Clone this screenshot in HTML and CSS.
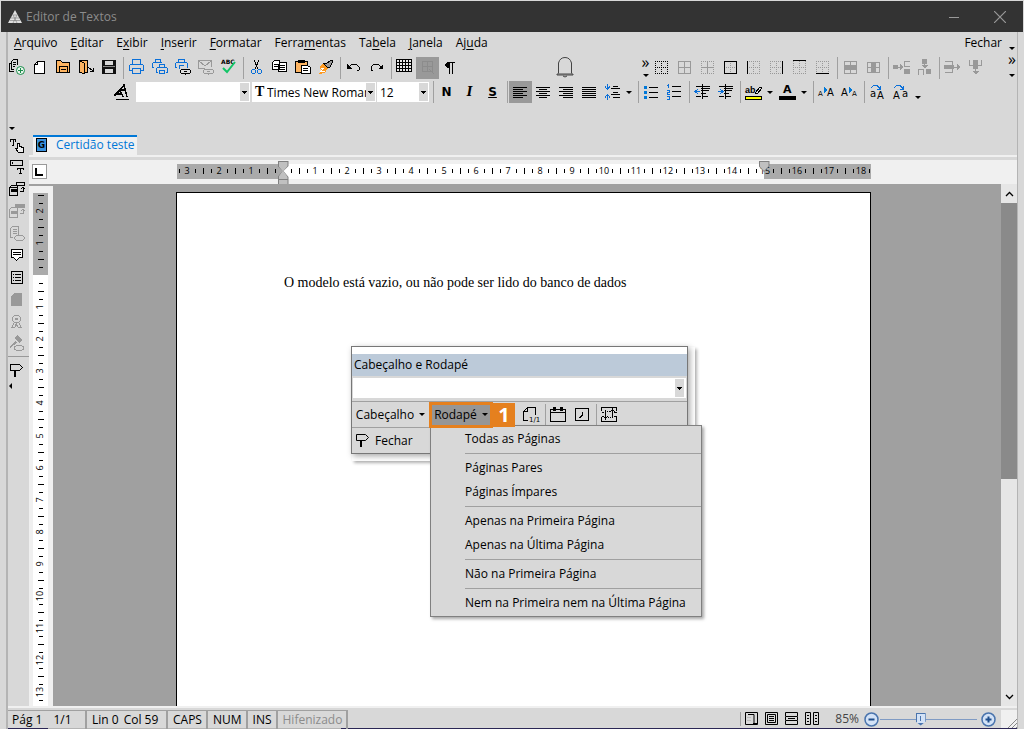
FILE: index.html
```html
<!DOCTYPE html>
<html lang="pt-BR">
<head>
<meta charset="utf-8">
<title>Editor de Textos</title>
<link rel="stylesheet" href="styles.css">
</head>
<body>

<header class="titlebar">
<svg class="logo" width="14" height="14" viewBox="0 0 14 14"><path d="M7 0L14 13H0z" fill="#e0e0e0"/><path d="M3 8h8M2 10.500h10M5 5h4M5 5l4 8M9 5l-4 8" stroke="#777" stroke-width=".6" fill="none"/></svg>
<h1>Editor de Textos</h1>
<button class="win" aria-label="Minimizar"><svg width="12" height="12"><path d="M1 6.500h10" stroke="#999"/></svg></button>
<button class="win" aria-label="Fechar janela"><svg width="12" height="12"><path d="M0 0l12 12M12 0L0 12" stroke="#999" stroke-width="1.200"/></svg></button>
</header>

<div class="frame">

<div class="top">
<div class="bars">
<nav class="menubar">
<button><u>A</u>rquivo</button>
<button><u>E</u>ditar</button>
<button>E<u>x</u>ibir</button>
<button><u>I</u>nserir</button>
<button><u>F</u>ormatar</button>
<button>Ferra<u>m</u>entas</button>
<button>Ta<u>b</u>ela</button>
<button><u>J</u>anela</button>
<button>Aj<u>u</u>da</button>
<button class="close">Fechar</button>
</nav>

<div class="toolbar main-tools">
<button class="tool" aria-label="Novo modelo"><svg viewBox="0 0 17 17"><path d="M6 12.500H1.500V4.500H3M3.500 10.500V2.500L5.500.5h4v5" fill="none" stroke="#000"/><path d="M5 3.500h3M5 5.500h3M5 7.500h2M3 10.500h3" stroke="#000"/><circle cx="12.500" cy="11.500" r="4" fill="#e8f5ec" stroke="#1a8c4a" shape-rendering="auto"/><path d="M10 11.500h5M12.500 9v5" stroke="#1a8c4a"/></svg></button>
<button class="tool" aria-label="Novo"><svg viewBox="0 0 17 17"><path d="M6.500 2.500h7v12h-10v-9z" fill="#fff" stroke="#000"/><path d="M6.500 2.500v3h-3" fill="none" stroke="#000"/></svg></button>
<button class="tool" aria-label="Abrir"><svg viewBox="0 0 17 17"><path d="M2.500 13.500v-12h4l2 2h7v10z" fill="#fdb462" stroke="#000"/><path d="M5.500 13.500v-6h8v6M7 10.500h5" fill="none" stroke="#000"/></svg></button>
<button class="tool" aria-label="Sair"><svg viewBox="0 0 17 17"><path d="M2.500 1.500h8v12h-8z" fill="#fdb462" stroke="#000"/><path d="M2.500 1.500l5 3v10l-5-1z" fill="#fdb462" stroke="#000"/><path d="M11 8l5 4M16.500 9v3.500H13" fill="none" stroke="#000"/></svg></button>
<button class="tool" aria-label="Salvar"><svg viewBox="0 0 17 17"><path d="M2 1h14v14H2z" fill="#111"/><path d="M5 2h8v4H5zM5 10h8v4H5z" fill="#d8d8d8"/><path d="M3 7.500h12" stroke="#888"/></svg></button>
<span class="sep"></span>
<button class="tool blue" aria-label="Imprimir"><svg viewBox="0 0 17 17"><path d="M4.500 5V.5h8V5M4.500 11.500h-3v-5l1-1h12l1 1v5h-3M4.500 9.500h8v5h-8z"/></svg></button>
<button class="tool blue" aria-label="Imprimir rápido"><svg viewBox="0 0 17 17"><path d="M4.500 3V.5h5V3M3 8.500H1.500v-4l1-1h8l1 1M8.500 8V5.500h5V8M7 13.500H5.500v-4l1-1h9l1 1v4H15M8.500 11.500h5v3h-5z"/></svg></button>
<button class="tool blue" aria-label="Visualizar impressão"><svg viewBox="0 0 17 17"><path d="M4.500 3V.5h6V3M3 8.500H1.500v-4l1-1h10l1 1v4M5 10V6.500h5"/><ellipse cx="11.500" cy="12.500" rx="5" ry="2.500" fill="#ddd" stroke="#000"/><path class="k" d="M10 12.500h3"/></svg></button>
<button class="tool gray" aria-label="Enviar"><svg viewBox="0 0 17 17"><path d="M8 9.500H1.500v-8h13v6M2 2l6 5 6-5"/><ellipse cx="11.500" cy="12.500" rx="5" ry="2.500"/><path d="M10 12.500h3"/></svg></button>
<button class="tool" aria-label="Ortografia"><svg viewBox="0 0 17 17"><text x="1" y="5" class="t6">ABC</text><path d="M3 9l4 4 8-10" fill="none" stroke="#11c566" stroke-width="2" shape-rendering="auto"/></svg></button>
<span class="sep"></span>
<button class="tool" aria-label="Recortar"><svg viewBox="0 0 17 17"><path d="M6 1l4.500 10M11 1L6.500 11" stroke="#000" fill="none"/><circle cx="5.500" cy="12.500" r="2" class="b"/><circle cx="11.500" cy="12.500" r="2" class="b"/></svg></button>
<button class="tool" aria-label="Copiar"><svg viewBox="0 0 17 17"><path d="M1.500 3.500l2-2h5v9h-7zM7.500 5.500l2-2h6v9h-8z" fill="#fff" stroke="#000"/><path d="M3 5.500h4M3 7.500h4M9 6.500h5M9 8.500h5M9 10.500h5" stroke="#000"/></svg></button>
<button class="tool" aria-label="Colar"><svg viewBox="0 0 17 17"><path d="M1.500 2.500h12v11h-12z" fill="#fdb462" stroke="#000"/><path d="M4 1h7v3H4z"/><path d="M7.500 6.500h6l3 2v6h-9z" fill="#fff" stroke="#000"/><path d="M9 9.500h5M9 11.500h5" stroke="#000"/></svg></button>
<button class="tool" aria-label="Pincel"><svg viewBox="0 0 17 17"><path d="M3 7l3-2 5 4-3 5-7 1 3-3z" fill="#ff9a1f"/><path d="M4 9h3l-3 3h4" stroke="#fff" fill="none"/><path d="M6 4l5 5 2-1 3-6-2-1-5 4z" fill="#999" stroke="#000"/></svg></button>
<span class="sep"></span>
<button class="tool" aria-label="Desfazer"><svg viewBox="0 0 17 17"><path d="M4 8l3-3h4l3 3v3l-2 1" fill="none" stroke="#000"/><path d="M2 5v5h5z"/></svg></button>
<button class="tool" aria-label="Refazer"><svg viewBox="0 0 17 17"><path d="M13 8l-3-3H6L3 8v3l2 1" fill="none" stroke="#000"/><path d="M15 5v5h-5z"/></svg></button>
<span class="sep"></span>
<button class="tool" aria-label="Tabela"><svg viewBox="0 0 17 17"><path d="M.5.500h15v12H.5z" fill="#e8e8e8" stroke="#000"/><path class="k" d="M0 3.500h16M0 6.500h16M0 9.500h16M3.500 0v13M6.500 0v13M9.500 0v13M12.500 0v13"/></svg></button>
<button class="tool active" aria-label="Grade"><svg viewBox="0 0 17 17"><path d="M3.500 2.500h10v10h-10zM8.500 3v10M3 7.500h11M10 10l5 5" fill="none" stroke="#8c8c8c"/></svg></button>
<button class="tool" aria-label="Marcas de parágrafo"><svg viewBox="0 0 17 17"><path d="M7 3v6H5L3 7V5l2-2z"/><path class="k" d="M6 3.500h7M7.500 3v12M10.500 3v12"/></svg></button>

<button class="bell" aria-label="Notificações"><svg width="18" height="21" viewBox="0 0 18 21"><path d="M2.500 16.500V6Q4 .5 9 .5T15.500 6v10.500M1 17h16v1H1zM7 19q2 2 4 0" fill="none" stroke="#444"/></svg></button>

<div class="toolbar border-tools">
<span class="more">»<i class="down"></i></span>
<button class="tool" aria-label="Sem bordas"><svg viewBox="0 0 17 17"><path class="dots k" d="M2 2.500h13M2 8.500h13M2 14.500h13M2.500 2v13M8.500 2v13M14.500 2v13"/></svg></button>
<button class="tool gray" aria-label="Todas as bordas"><svg viewBox="0 0 17 17"><path d="M2.500 2.500h12v12h-12zM2.500 8.500h12M8.500 2.500v12"/></svg></button>
<button class="tool gray" aria-label="Bordas internas"><svg viewBox="0 0 17 17"><path d="M2 8.500h13M8.500 2v13"/><path class="dots" d="M2 2.500h13M2 14.500h13M2.500 2v13M14.500 2v13"/></svg></button>
<button class="tool gray" aria-label="Contorno"><svg viewBox="0 0 17 17"><path class="dots" d="M2 8.500h13M8.500 2v13"/><path d="M2.500 2.500h12v12h-12z" class="k"/></svg></button>
<button class="tool gray" aria-label="Borda esquerda"><svg viewBox="0 0 17 17"><path class="dots" d="M2 2.500h13M2 8.500h13M2 14.500h13M8.500 2v13M14.500 2v13"/><path d="M2.500 2v13" class="k"/></svg></button>
<button class="tool gray" aria-label="Borda direita"><svg viewBox="0 0 17 17"><path class="dots" d="M2 2.500h13M2 8.500h13M2 14.500h13M8.500 2v13M2.500 2v13"/><path d="M14.500 2v13" class="k"/></svg></button>
<button class="tool gray" aria-label="Borda superior"><svg viewBox="0 0 17 17"><path class="dots" d="M2 14.500h13M2 8.500h13M2.500 2v13M8.500 2v13M14.500 2v13"/><path d="M2 1.500h13" class="k"/></svg></button>
<button class="tool gray" aria-label="Borda inferior"><svg viewBox="0 0 17 17"><path class="dots" d="M2 2.500h13M2 8.500h13M2.500 2v13M8.500 2v13M14.500 2v13"/><path d="M2 14.500h13" class="k"/></svg></button>
<span class="sep"></span>
<button class="tool gray" aria-label="Selecionar linha"><svg viewBox="0 0 17 17"><path d="M2.500 2.500h12v12h-12zM8.500 2v13"/><path d="M2 6h13v5H2z" class="g"/></svg></button>
<button class="tool gray" aria-label="Selecionar coluna"><svg viewBox="0 0 17 17"><path d="M2.500 3.500h12v10h-12zM2.500 8.500h12"/><path d="M6 3h5v11H6z" class="g"/></svg></button>
<span class="sep"></span>
<button class="tool gray" aria-label="Inserir linha"><svg viewBox="0 0 17 17"><path d="M0 6h5v4H0zM11 10h6v5h-6zM7 5l4 3-4 3z" class="g"/><path d="M5 8.500h5M17 2.500h-5.500v5H17"/></svg></button>
<button class="tool gray" aria-label="Inserir coluna"><svg viewBox="0 0 17 17"><path d="M6 0h5v5H6zM10 10h5v5h-5zM6 6h6l-3 4z" class="g"/><path d="M8.500 5v3M2.500 16v-5.500h5V16"/></svg></button>
<span class="sep"></span>
<button class="tool gray" aria-label="Excluir linha"><svg viewBox="0 0 17 17"><path d="M0 6h10v4H0zM13 5l4 3-4 3z" class="g"/><path d="M10 8.500h5M1 2.500h7v11H1"/></svg></button>
<button class="tool gray" aria-label="Excluir coluna"><svg viewBox="0 0 17 17"><path d="M6 1h5v9H6zM5 12h7l-3 4z" class="g"/><path d="M8.500 10v4M2.500 1v5h12V1"/></svg></button>
</div>
</div>

<div class="toolbar format-tools">
<button class="tool" aria-label="Estilos"><svg viewBox="0 0 17 17"><path d="M4 9l7-8 3 12M7 6h5M1 12l6-6 3 7M3 10h6" fill="none" stroke="#000" stroke-width="1.500"/><path class="k" d="M3 15.500h13"/></svg></button>
<label class="combo style-box"><input type="text" aria-label="Estilo"><i class="down"></i></label>
<label class="combo font-box"><b>T</b><input type="text" value="Times New Roman" aria-label="Fonte"><i class="down"></i></label>
<label class="combo size-box"><input type="text" value="12" aria-label="Tamanho"><i class="down"></i></label>
<span class="sep"></span>
<button class="tool letter" aria-label="Negrito">N</button>
<button class="tool letter italic" aria-label="Itálico">I</button>
<button class="tool letter under" aria-label="Sublinhado">S</button>
<span class="sep"></span>
<button class="tool active" aria-label="Alinhar à esquerda"><svg viewBox="0 0 17 17"><path class="k" d="M1 3.500h14M1 5.500h10M1 7.500h14M1 9.500h10M1 11.500h14M1 13.500h10"/></svg></button>
<button class="tool" aria-label="Centralizar"><svg viewBox="0 0 17 17"><path class="k" d="M1 3.500h14M4 5.500h8M1 7.500h14M4 9.500h8M1 11.500h14M4 13.500h8"/></svg></button>
<button class="tool" aria-label="Alinhar à direita"><svg viewBox="0 0 17 17"><path class="k" d="M1 3.500h14M5 5.500h10M1 7.500h14M5 9.500h10M1 11.500h14M5 13.500h10"/></svg></button>
<button class="tool" aria-label="Justificar"><svg viewBox="0 0 17 17"><path class="k" d="M1 3.500h14M1 5.500h14M1 7.500h14M1 9.500h14M1 11.500h14M1 13.500h14"/></svg></button>
<button class="tool" aria-label="Espaçamento"><svg viewBox="0 0 17 17"><path class="b" d="M3.500 0v5M1 2.500l2.500 3 2.500-3M3.500 16v-5M1 13.500l2.500-3 2.500 3"/><path class="k" d="M9 2.500h5M7 4.500h9M9 8.500h5M7 10.500h9M9 13.500h7"/></svg></button>
<i class="down wide"></i>
<span class="sep"></span>
<button class="tool" aria-label="Marcadores"><svg viewBox="0 0 17 17"><path d="M1 2h3v3H1zM1 7h3v3H1zM1 12h3v3H1z" fill="#0078d7"/><path class="k" d="M6 3.500h9M6 8.500h9M6 13.500h9"/></svg></button>
<button class="tool" aria-label="Numeração"><svg viewBox="0 0 17 17"><path class="b" d="M2.500 0v4M1 1.500h1M1 6.500h2v2H1v2h3M1 12.500h2v3H1"/><path class="k" d="M6 2.500h9M6 7.500h9M6 12.500h9"/></svg></button>
<span class="sep"></span>
<button class="tool" aria-label="Diminuir recuo"><svg viewBox="0 0 17 17"><path class="k" d="M2 2.500h14M7 4.500h9M7 6.500h8M7 9.500h5M2 12.500h5M8 12.500h6M8.500 0v15"/><path d="M1 7.500h5M4 5L1 7.500 4 10" class="b"/></svg></button>
<button class="tool" aria-label="Aumentar recuo"><svg viewBox="0 0 17 17"><path class="k" d="M2 2.500h14M7 4.500h9M7 6.500h8M7 9.500h5M2 12.500h5M8 12.500h6M8.500 0v15"/><path d="M1 7.500h5M3 5l3 2.500L3 10" class="b"/></svg></button>
<span class="sep"></span>
<button class="tool" aria-label="Realce"><svg viewBox="0 0 17 17"><text x="0" y="9" class="t9">ab</text><path d="M10 9l5-6 2 1-5 6z" fill="#ddd" stroke="#000"/><path d="M.5 12.500h16v3H.5z" fill="#ff0" stroke="#000"/></svg></button>
<i class="down wide"></i>
<button class="tool" aria-label="Cor da fonte"><svg viewBox="0 0 17 17"><text x="4" y="9" class="t11">A</text><path d="M0 12h17v4H0z"/></svg></button>
<i class="down wide"></i>
<span class="sep"></span>
<button class="tool" aria-label="Aumentar fonte"><svg viewBox="0 0 17 17"><text x="0" y="12" class="t7">A</text><text x="9" y="12" class="t10">A</text><path d="M6 3l4 3-4 3z" fill="#0078d7"/></svg></button>
<button class="tool" aria-label="Diminuir fonte"><svg viewBox="0 0 17 17"><text x="0" y="12" class="t10">A</text><text x="11" y="12" class="t7">A</text><path d="M8 3l4 3-4 3z" fill="#0078d7"/></svg></button>
<span class="sep"></span>
<button class="tool" aria-label="Maiúsculas"><svg viewBox="0 0 17 17"><text x="1" y="13" class="t10">a</text><text x="8" y="15" class="t10">A</text><path class="b" d="M2 4l3-3h3l3 4M8 5h3V2"/></svg></button>
<button class="tool" aria-label="Minúsculas"><svg viewBox="0 0 17 17"><text x="1" y="15" class="t10">A</text><text x="10" y="13" class="t10">a</text><path class="b" d="M2 4l3-3h3l3 4M8 5h3V2"/></svg></button>
<i class="down wide low"></i>
</div>
</div>
<div class="overflow"><i class="down"></i><span>»</span><i class="down"></i></div>
</div>

<div class="work">
<aside class="side">
<i class="down"></i>
<button class="tool" aria-label="Campo de texto"><svg viewBox="0 0 17 17"><path d="M2.500 5V2.500h5V5M5 3v6M4 8.500h2" fill="none" stroke="#000"/><path d="M9.500 11V6.500h2v3l4 1v5h-5l-3-4h2" fill="#eee" stroke="#000"/></svg></button>
<button class="tool" aria-label="Caixa de texto"><svg viewBox="0 0 17 17"><path class="k" d="M2.500 1.500h12v5h-12zM4.500 3v2M9.500 11V9.500h6V11M12.500 10v5M11 14.500h3"/></svg></button>
<button class="tool" aria-label="Modelo"><svg viewBox="0 0 17 17"><path class="k" d="M1.500 14.500v-8l2-2h6v10zM2 6.500h7M8.500 3V1.500h8v3h-8zM12 10.500h3v-4M13 8l2-2 2 2"/><path d="M3 8h6v3H3z"/></svg></button>
<button class="tool gray" aria-label="Atualizar modelo"><svg viewBox="0 0 17 17"><path d="M1.500 14.500v-8l2-2h6v10zM12 10.500h3v-4M13 8l2-2 2 2"/><path d="M3 8h6v3H3zM7 1h10v4H7z" class="g"/></svg></button>
<button class="tool gray" aria-label="Visualizar"><svg viewBox="0 0 17 17"><path d="M5 12.500H2.500v-9l2-2h6v8M5 4.500h4M5 6.500h4M5 8.500h4"/><ellipse cx="11.500" cy="13" rx="5" ry="2.500"/></svg></button>
<button class="tool" aria-label="Comentário"><svg viewBox="0 0 17 17"><path d="M3.500 2.500h11v8h-3l-3 3-3-3h-2z" fill="#fff" stroke="#000"/><path class="k" d="M5 5.500h8M5 7.500h8"/></svg></button>
<button class="tool" aria-label="Lista"><svg viewBox="0 0 17 17"><path class="k" d="M3.500 2.500h11v12h-11zM5 5.500h1M7 5.500h6M5 8.500h1M7 8.500h6M5 11.500h1M7 11.500h6"/></svg></button>
<button class="tool gray" aria-label="Página"><svg viewBox="0 0 17 17"><path d="M6 2h8v13H3V5z" class="g"/></svg></button>
<button class="tool gray" aria-label="Certificado"><svg viewBox="0 0 17 17"><circle cx="8.500" cy="6" r="4"/><circle cx="8.500" cy="6" r="1.500" class="g"/><path d="M6 10l-2 4h3l1-3 2 3h3l-2-4"/></svg></button>
<button class="tool gray" aria-label="Julgamento"><svg viewBox="0 0 17 17"><path d="M6 3l3-3 5 5-3 3zM7 6L1 12l1 1 7-5z" class="g"/><ellipse cx="11" cy="13" rx="5" ry="2.500"/></svg></button>
<span class="rule"></span>
<button class="tool" aria-label="Fechar documento"><svg viewBox="0 0 17 17"><path class="k" d="M2.500 2.500h9l3 3-3 3h-9z"/><path d="M6 9h2v6H6z"/></svg></button>
<i class="left"></i>
</aside>

<main class="editor">
<div class="tabs">
<a class="tab" href="#"><span class="tab-icon">G</span>Certidão teste</a>
</div>
<div class="ruler-row">
<span class="corner"><svg width="13" height="13"><path d="M3 3v7h7" fill="none" stroke="#000" stroke-width="2"/></svg></span>
<div class="ruler-area">
<div class="hruler" id="hruler"><i class="indent"></i><i class="indent right"></i></div>
</div>
</div>
<div class="document">
<div class="vruler-col"><div class="vruler" id="vruler"></div></div>
<div class="canvas">
<article class="page">
<p>O modelo está vazio, ou não pode ser lido do banco de dados</p>
</article>
</div>
<div class="scroll">
<button aria-label="Rolar para cima"><svg width="9" height="6"><path d="M1 5l3.500-3.500L8 5" fill="none" stroke="#000" stroke-width="1.300"/></svg></button>
<div class="track"><div class="thumb"></div></div>
<button aria-label="Rolar para baixo"><svg width="9" height="6"><path d="M1 1l3.500 3.500L8 1" fill="none" stroke="#000" stroke-width="1.300"/></svg></button>
</div>

<section class="palette">
<h2>Cabeçalho e Rodapé</h2>
<label class="combo palette-box"><input type="text" aria-label="Conteúdo"><i class="down"></i></label>
<div class="palette-row">
<button class="drop">Cabeçalho<i class="down"></i></button>
<button class="drop marked">Rodapé<i class="down"></i></button>
<span class="step">1</span>
<button class="tool" aria-label="Número da página"><svg viewBox="0 0 17 17"><path class="k" d="M6 14.500H1.500v-9l4-4h8v7M5.500 2v3.500H2"/><text x="7" y="16" class="t7">1/1</text></svg></button>
<span class="sep"></span>
<button class="tool" aria-label="Data"><svg viewBox="0 0 17 17"><path class="k" d="M.5 3.500h15v12H.5zM1 6.500h15"/><path d="M3 1h3v4H3zM10 1h3v4h-3z"/></svg></button>
<button class="tool" aria-label="Hora"><svg viewBox="0 0 17 17"><path class="k" d="M2.500 2.500h13v12h-13zM9.500 6v3l-3 3"/></svg></button>
<span class="sep"></span>
<button class="tool" aria-label="Margens"><svg viewBox="0 0 17 17"><path class="k" d="M.5 5V1.500h15V5M.5 11v4.500h15V11M4.500 4v8M11.500 4v8M1 6.500h2M6 5.500h1M8 5.500h1M13 6.500h3M1 10.500h2M7 11.500h1M9 11.500h1M13 10.500h3M2.500 10l2 3 2-3M9.500 6l2-3 2 3"/></svg></button>
</div>
<div class="palette-row">
<button class="shut"><svg width="17" height="17" viewBox="0 0 17 17"><path d="M1.500 2.500h9l3 3-3 3h-9z" fill="none" stroke="#000"/><path d="M5 9h2v6H5z"/></svg>Fechar</button>
</div>
<div class="menu" role="menu">
<button role="menuitem">Todas as Páginas</button>
<hr>
<button role="menuitem">Páginas Pares</button>
<button role="menuitem">Páginas Ímpares</button>
<hr>
<button role="menuitem">Apenas na Primeira Página</button>
<button role="menuitem">Apenas na Última Página</button>
<hr>
<button role="menuitem">Não na Primeira Página</button>
<hr>
<button role="menuitem">Nem na Primeira nem na Última Página</button>
</div>
</section>
</div>
</main>
</div>

<footer class="status">
<span class="cell pos">Pág 1<span>1/1</span></span>
<span class="cell line">Lin 0<span>Col 59</span></span>
<span class="cell">CAPS</span>
<span class="cell">NUM</span>
<span class="cell">INS</span>
<span class="cell off">Hifenizado</span>
<div class="views">
<button aria-label="Página inteira"><svg width="14" height="14"><path class="k" d="M.5.5h12v12H.5zM3 2.500h6v9M8 11.500h4"/><path d="M2 5.500h4M2 8.500h4" stroke="#bbb"/></svg></button>
<button aria-label="Layout de impressão"><svg width="14" height="14"><path class="k" d="M.5.5h12v12H.5zM2.500 2.500h8v8h-8zM4 4.500h5M4 6.500h5M4 8.500h5"/></svg></button>
<button aria-label="Normal"><svg width="14" height="14"><path class="k" d="M.5 4V.5h12V4M.5 4.500h12v4H.5zM3 6.500h7M.5 9v3.500h12V9"/></svg></button>
<button aria-label="Duas páginas"><svg width="14" height="14"><path class="k" d="M.5.5h5v12h-5zM8.500.5h5v12h-5zM2 3.500h2M2 6.500h2M2 9.500h2M10 3.500h2M10 6.500h2M10 9.500h2"/></svg></button>
</div>
<label class="zoom-label" for="zoom">85%</label>
<button class="round" aria-label="Reduzir"><svg width="15" height="15"><circle cx="7.500" cy="7.500" r="6.500" fill="#d3e2f6" stroke="#4a74ad" stroke-width="1.500"/><path d="M4.500 7.500h6" stroke="#1f4e8c" stroke-width="2"/></svg></button>
<input class="zoom" id="zoom" type="range" min="0" max="100" value="41">
<button class="round" aria-label="Ampliar"><svg width="15" height="15"><circle cx="7.500" cy="7.500" r="6.500" fill="#d3e2f6" stroke="#4a74ad" stroke-width="1.500"/><path d="M4.500 7.500h6M7.500 4.500v6" stroke="#1f4e8c" stroke-width="2"/></svg></button>
<span class="grip"><svg width="9" height="9"><path d="M0 9l9-9M4 9l5-5M8 9l1-1" stroke="#888"/></svg></span>
</footer>
</div>

<script src="ruler.js"></script>
</body>
</html>
```

FILE: styles.css
```css
* {
box-sizing: border-box;
}

body {
margin: 0;
height: 100vh;
display: flex;
flex-direction: column;
background: #d8d8d8;
color: #000;
font: 12px/16px "Open Sans", "Noto Sans", sans-serif;
overflow: hidden;
}

button, input {
font: inherit;
color: inherit;
border: 0;
padding: 0;
margin: 0;
background: none;
}

.titlebar {
display: flex;
align-items: center;
flex: none;
height: 31px;
margin: 1px 1px 0;
padding: 0 17px 0 7px;
background: #333;
}

.titlebar h1 {
flex: 1;
margin: 0 0 0 4px;
color: #8c8c8c;
font-size: 12px;
font-weight: normal;
}

.win {
display: flex;
margin-left: 34px;
}

.frame {
flex: 1;
min-height: 0;
display: flex;
flex-direction: column;
margin: 0 6px 0 6px;
padding-bottom: 1px;
border-left: 2px solid #b4b4b4;
border-right: 1px solid #b4b4b4;
background: linear-gradient(90deg, #2b2655 4%, #b4b4b4 4%, #b4b4b4 33%, #2b2655 33%) bottom / 100% 1px no-repeat;
}

.top {
display: flex;
flex: none;
height: 92px;
}

.bars {
flex: 1;
min-width: 0;
}

.menubar {
display: flex;
height: 23px;
padding: 0 5px 2px 6px;
gap: 13px;
align-items: center;
}

.menubar .close {
margin-left: auto;
}

u {
text-underline-offset: 2px;
}

.toolbar {
display: flex;
align-items: center;
height: 25px;
}

.main-tools {
margin-left: -3px;
}

.tool {
display: flex;
align-items: center;
justify-content: center;
flex: none;
width: 23px;
height: 22px;
}

.tool svg {
width: 17px;
height: 17px;
shape-rendering: crispEdges;
overflow: visible;
}

.tool.active {
background: #999;
}

.k {
fill: none;
stroke: #000;
}

.b, .blue path {
fill: none;
stroke: #0a6fd8;
}

.blue .k {
stroke: #000;
}

.gray svg > * {
fill: none;
stroke: #999;
}

.gray svg .k {
stroke: #000;
}

.gray svg .g {
fill: #999;
stroke: none;
}

.dots {
stroke-dasharray: 1 1;
}

.t6 { font: bold 6px "DejaVu Sans"; }
.t7 { font: 7px "DejaVu Sans"; }
.t9 { font: bold 9px "Liberation Sans"; }
.t10 { font: 10px "DejaVu Sans"; }
.t11 { font: bold 11px "DejaVu Sans"; }

.sep {
flex: none;
width: 1px;
height: 22px;
margin: 0 1px 0 3px;
background: #a0a0a0;
}

.down {
flex: none;
border: 3px solid transparent;
border-top-color: #000;
border-bottom: 0;
}

.down.wide {
margin: 0 3px 0 2px;
}

.down.low {
align-self: end;
margin: 0 0 5px 3px;
}

.bell {
display: flex;
margin: 0 auto;
padding-left: 27px;
}

.border-tools {
padding-right: 20px;
}

.more {
display: flex;
flex-direction: column;
align-items: center;
width: 9px;
font-size: 16px;
line-height: 8px;
gap: 8px;
}

.format-tools {
height: 24px;
padding-left: 102px;
}

.combo {
display: flex;
align-items: center;
flex: none;
height: 20px;
background: #fff;
}

.combo input {
flex: 1;
min-width: 0;
height: 20px;
outline: 0;
}

.combo .down {
width: 9px;
height: 18px;
margin-right: 1px;
border: 0;
background: linear-gradient(#000, #000) 2px 8px / 5px 1px no-repeat,
linear-gradient(#000, #000) 3px 9px / 3px 1px no-repeat,
linear-gradient(#000, #000) 4px 10px / 1px 1px no-repeat, #d8d8d8;
}

.style-box {
width: 114px;
margin: 0 2px 0 3px;
}

.font-box {
width: 124px;
}

.font-box b {
width: 15px;
padding-left: 3px;
font: bold 14px "Liberation Serif", serif;
}

.size-box {
width: 52px;
margin: 0 1px;
padding-left: 3px;
}

.letter {
font: bold 12px "DejaVu Sans", sans-serif;
}

.italic {
font-family: "DejaVu Serif", serif;
font-style: italic;
}

.under {
text-decoration: underline;
}

.overflow {
display: flex;
flex-direction: column;
align-items: center;
width: 10px;
padding-top: 15px;
font-size: 16px;
line-height: 12px;
}

.overflow span {
margin: 3px 0 9px;
height: 12px;
}

.work {
display: flex;
flex: 1;
min-height: 0;
}

.side {
display: flex;
flex-direction: column;
flex: none;
width: 21px;
}

.side .tool {
width: 17px;
}

.side > .down {
margin: 3px 0 4px 1px;
align-self: start;
}

.rule {
flex: none;
height: 1px;
margin: 2px 0;
background: #999;
}

.left {
align-self: start;
margin: 2px 0 0 1px;
border: 3px solid transparent;
border-right-color: #000;
border-left: 0;
}

.editor {
display: flex;
flex-direction: column;
flex: 1;
min-width: 0;
}

.tabs {
padding: 11px 0 0 4px;
border-bottom: 2px solid #f0f0f0;
margin-bottom: 3px;
}

.tab {
display: inline-flex;
align-items: center;
height: 20px;
padding: 0 2px 2px 3px;
gap: 9px;
vertical-align: top;
border-top: 2px solid #0078d7;
background: #f0f0f0;
color: #0078d7;
text-decoration: none;
white-space: nowrap;
}

.tab-icon {
width: 11px;
height: 14px;
border: 1px solid #000;
background: #3b93e0;
color: #000;
font: bold 9px/12px "DejaVu Sans", sans-serif;
text-align: center;
}

.ruler-row {
display: flex;
flex: none;
height: 24px;
background: #f0f0f0;
}

.corner {
width: 15px;
height: 15px;
margin: 4px 6px 0 3px;
border: 1px solid #999;
background: #fff;
}

.corner svg {
display: block;
}

.ruler-area {
flex: 1;
padding: 4px 23px 0 0;
}

.hruler {
position: relative;
width: 694px;
height: 15px;
margin: 0 auto;
background: linear-gradient(90deg, #aaa 106px, #fff 106px, #fff 587px, #aaa 587px);
}

.hruler svg, .vruler svg {
display: block;
shape-rendering: crispEdges;
}

.hruler text, .vruler text {
font-size: 9px;
text-anchor: middle;
}

.indent {
position: absolute;
left: 101px;
top: -3px;
width: 11px;
height: 25px;
background: #808080;
clip-path: polygon(0 0, 100% 0, 100% 5px, 6px 10px, 100% 16px, 100% 100%, 0 100%, 0 16px, 5px 10px, 0 5px);
}

.indent::after {
content: "";
position: absolute;
inset: 1px;
background: linear-gradient(#c0c0c0 17px, #808080 17px, #808080 18px, #c0c0c0 18px);
clip-path: polygon(0 0, 100% 0, 100% 4px, 5px 9px, 100% 15px, 100% 100%, 0 100%, 0 15px, 4px 9px, 0 4px);
}

.indent.right {
left: 582px;
height: 11px;
clip-path: polygon(0 0, 100% 0, 100% 5px, 50% 100%, 0 5px);
}

.indent.right::after {
clip-path: polygon(0 0, 100% 0, 100% 4px, 50% 100%, 0 4px);
}

.document {
position: relative;
display: flex;
flex: 1;
min-height: 0;
background: #a0a0a0;
}

.vruler-col {
flex: none;
width: 24px;
margin-top: 2px;
padding: 7px 0 0 4px;
overflow: hidden;
background: #f0f0f0;
}

.vruler {
width: 15px;
height: 100%;
background: linear-gradient(#aaa 82px, #fff 82px);
}

.canvas {
flex: 1;
padding: 8px 7px 0 0;
overflow: hidden;
}

.page {
width: 695px;
height: 100%;
margin: 0 auto;
padding: 81px 107px 0;
border: 1px solid #000;
border-bottom: 0;
background: #fff;
}

.page p {
margin: 0;
font: 14px/18px "Liberation Serif", serif;
white-space: nowrap;
}

.scroll {
display: flex;
flex-direction: column;
width: 16px;
background: #e6e6e6;
}

.scroll button {
display: flex;
align-items: center;
justify-content: center;
height: 19px;
}

.track {
flex: 1;
}

.thumb {
height: 57%;
background: #8a8a8a;
}

.palette {
position: absolute;
left: 322px;
top: 162px;
width: 337px;
padding-top: 7px;
border: 1px solid #777;
background: linear-gradient(#fff 7px, #d8d8d8 7px);
box-shadow: 2px 2px 6px rgba(0, 0, 0, .35), 4px 4px 0 3px #fff, 6px 6px 3px 3px rgba(0, 0, 0, .3);
}

.palette h2 {
margin: 0;
padding-left: 2px;
background: #bccad9;
font-size: 12px;
font-weight: normal;
line-height: 22px;
}

.palette-box {
height: 20px;
margin: 2px 1px 3px;
padding-right: 1px;
}

.palette-row {
display: flex;
align-items: center;
height: 26px;
border-top: 1px solid #a0a0a0;
}

.drop {
display: flex;
align-items: center;
justify-content: center;
height: 24px;
width: 77px;
gap: 5px;
}

.drop.marked {
width: 64px;
height: 26px;
border: 3px solid #e5801e;
background: #969696;
z-index: 2;
}

.step {
width: 22px;
margin-right: 4px;
height: 24px;
z-index: 2;
background: #e5801e;
color: #fff;
font-size: 20px;
font-weight: bold;
line-height: 23px;
text-align: center;
}

.shut {
display: flex;
align-items: center;
gap: 3px;
padding-left: 3px;
}

.menu {
position: absolute;
left: 78px;
top: 78px;
width: 272px;
padding: 1px 0;
border: 1px solid #808080;
background: #d8d8d8;
box-shadow: 2px 2px 3px rgba(0, 0, 0, .35);
}

.menu button {
display: block;
width: 100%;
height: 24px;
padding-left: 34px;
text-align: left;
white-space: nowrap;
}

.menu hr {
height: 1px;
margin: 2px 0 2px 34px;
border: 0;
background: #a0a0a0;
}

.status {
display: flex;
align-items: center;
flex: none;
height: 22px;
padding-top: 2px;
border-top: 2px solid #f0f0f0;
background: #d8d8d8;
}

.cell {
display: flex;
align-items: center;
height: 19px;
padding: 0 4px 0 5px;
border-top: 1px solid #a0a0a0;
border-right: 2px solid #a0a0a0;
}

.pos {
width: 79px;
padding-left: 4px;
gap: 11px;
}

.line {
width: 81px;
gap: 5px;
}

.off {
color: #8c8c8c;
}

.views {
display: flex;
gap: 6px;
margin-left: auto;
padding-left: 4px;
border-left: 1px solid #a0a0a0;
}

.views button, .round {
display: flex;
}

.zoom-label {
margin: 0 5px 0 16px;
color: #444;
}

.zoom {
appearance: none;
width: 97px;
height: 16px;
margin: 0 4px 0 1px;
background: linear-gradient(#7f9bc4, #7f9bc4) center / 100% 1px no-repeat;
}

.zoom::-webkit-slider-thumb {
appearance: none;
width: 10px;
height: 13px;
background: linear-gradient(#4a74ad, #4a74ad) center / 1px 5px no-repeat, #d3e2f6;
border: 1px solid #4a74ad;
border-bottom-width: 3px;
clip-path: polygon(0 0, 100% 0, 100% 9px, 50% 100%, 0 9px);
}

.grip {
align-self: stretch;
display: flex;
align-items: end;
justify-content: end;
width: 16px;
margin-left: 5px;
background: #f0f0f0;
}
```

FILE: ruler.js
```js
// one unit is 32.1px on screen at 85%
var UNIT = 32.1;

function tick(pos, size, vertical) {
var p = Math.round(pos);
if (vertical)
return '<rect x="' + (8 - Math.round(size / 2)) + '" y="' + p + '" width="' + size + '" height="1"/>';
return '<rect x="' + p + '" y="' + (7 - Math.round(size / 2)) + '" width="1" height="' + size + '"/>';
}

function drawRuler(id, zero, length, vertical) {
var out = '';
for (var q = Math.ceil(-zero / UNIT * 4); zero + q * UNIT / 4 < length; q++) {
var pos = zero + q * UNIT / 4;
if (q % 4 == 0) {
if (q == 0) continue;
var n = Math.abs(q / 4);
if (vertical)
out += '<text transform="translate(10 ' + Math.round(pos) + ') rotate(-90)">' + n + '</text>';
else
out += '<text x="' + Math.round(pos) + '" y="10">' + n + '</text>';
} else {
out += tick(pos, q % 2 == 0 ? 6 : 4, vertical);
}
}
var w = vertical ? 15 : length;
var h = vertical ? length : 15;
document.getElementById(id).insertAdjacentHTML('afterbegin', '<svg width="' + w + '" height="' + h + '">' + out + '</svg>');
}

drawRuler('hruler', 106, 694, false);
drawRuler('vruler', 82, Math.max(513, document.getElementById('vruler').clientHeight), true);
```
